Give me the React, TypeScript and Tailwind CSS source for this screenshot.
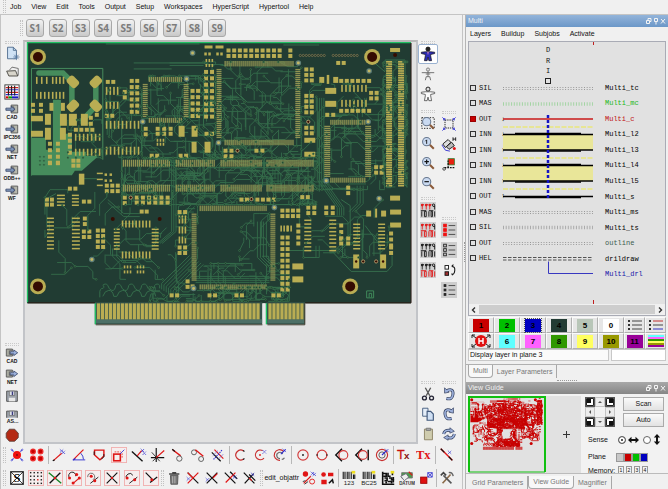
import { useState } from "react";
import type { ReactNode } from "react";
import clsx from "clsx";

/* ---------- board geometry ---------- */

type Rect = [number, number, number, number];
type Point = [number, number];

const pads: Rect[] = [];
const pins: Rect[] = [];

// cx, cy of the first pad, then columns, rows, pitch and pad size
function grid(cx: number, cy: number, cols: number, rows: number, dx = 5.5, dy = 5.5, w = 4, h = 4) {
  for (let r = 0; r < rows; r++)
    for (let c = 0; c < cols; c++) pads.push([cx + c * dx - w / 2, cy + r * dy - h / 2, w, h]);
}
function rowPins(x0: number, x1: number, y: number, h: number, step = 2, w = 1.3) {
  for (let x = x0; x <= x1; x += step) pins.push([x, y, w, h]);
}
function colPins(y0: number, y1: number, x: number, w: number, step = 2, h = 1.3) {
  for (let y = y0; y <= y1; y += step) pins.push([x, y, w, h]);
}
function legs(x0: number, n: number, step: number, y: number, h: number) {
  for (let i = 0; i < n; i++) pads.push([x0 + i * step, y, 1.6, h]);
}
function sideLegs(y0: number, n: number, step: number, x: number, w: number) {
  for (let i = 0; i < n; i++) pads.push([x, y0 + i * step, w, 1.5]);
}

// top left block
legs(36, 3, 5, 77, 7); legs(52, 4, 3.6, 77, 7);
legs(36, 4, 4, 92, 7); legs(52, 4, 3.6, 92, 7);
grid(33, 105, 2, 2, 8, 6); grid(51.5, 107, 1, 1, 5, 5, 4, 8); grid(63, 107, 1, 1, 5, 5, 4, 8);
pads.push([31, 116, 12, 5.5], [31, 131, 12, 6], [45, 114, 6, 11], [45, 128, 6, 12], [60, 114, 7, 12], [60, 128, 6, 12]);
pads.push([69, 114, 8, 12], [81, 114, 7, 12]);
grid(91, 118, 1, 2, 6, 6); grid(97, 115, 1, 1); grid(76, 130, 4, 1, 5.5);
legs(75, 7, 4, 134, 7); legs(75, 7, 4, 149, 7);
grid(70, 135, 1, 4, 5, 6); grid(50, 144, 2, 4, 8, 6.5);
grid(50, 163, 2, 1, 8); grid(73.5, 161, 2, 2, 5, 5);
// left centre
grid(108, 82, 2, 1); legs(106, 4, 3.7, 87, 8); legs(106, 4, 3.7, 102, 7); grid(107, 116, 2, 1);
grid(132, 81, 2, 6, 5.5, 6.2); grid(125, 92, 1, 2, 5, 5.5);
legs(106, 9, 4, 121, 8); legs(106, 9, 4, 147, 8);
grid(146, 129, 1, 2); grid(158, 129, 3, 2, 6.5, 5); grid(152, 156, 2, 1); grid(181, 156, 2, 1);
pads.push([179, 126, 6, 11], [192, 126, 6, 11], [192, 142, 5, 11], [205, 142, 6, 11]);
rowPins(149, 182, 77, 5); rowPins(149, 182, 118, 5); colPins(84, 117, 143, 5); colPins(84, 117, 184, 5);
legs(157, 3, 3, 139, 3); legs(157, 3, 3, 143, 3);
grid(193, 91, 2, 5, 5.5, 6.3); grid(206.5, 72, 2, 8, 6, 6.4); grid(207, 134, 2, 1);
pads.push([205, 45.5, 8, 3], [216, 45.5, 8, 3]);
grid(206, 54, 2, 1, 4, 4, 2.5, 3); grid(218, 54, 2, 1, 4, 4, 2.5, 3); legs(206, 3, 3, 59, 3); legs(206, 3, 3, 64, 3);
// main package
grid(229, 50.5, 10, 2, 5.7, 5.5); grid(291, 50.5, 1, 2);
rowPins(225, 293, 61, 5.5); rowPins(225, 293, 140, 5.5); colPins(69, 137, 217, 5); colPins(69, 137, 296, 5);
grid(226, 151, 2, 2, 6, 5.5); grid(257, 151, 2, 1, 6);
grid(307, 69.5, 2, 3); grid(307, 96, 2, 4); grid(307, 128, 2, 2);
pads.push([305, 138, 11, 5], [305, 152, 11, 5], [320, 77, 5, 6], [327.5, 75, 2.5, 9], [334, 77, 5, 6]);
pads.push([326, 88, 11, 6], [326, 101, 11, 6], [391, 48, 10, 4]);
grid(339, 63, 2, 1); grid(342, 81, 6, 1, 5.6); grid(342, 111, 6, 1, 5.6); grid(328, 115, 2, 1, 6);
legs(342, 7, 4, 85, 7); legs(342, 7, 4, 100, 7); grid(372, 93, 2, 2);
// right package and edge strips
rowPins(331, 365, 120, 5); rowPins(331, 365, 178, 5); colPins(126, 176, 325, 6); colPins(126, 176, 366, 6);
for (let y = 61; y < 187; y += 2.3) pads.push([387, y, 6, 1.7], [399, y, 6, 1.7]);
grid(377, 167.5, 2, 2); grid(349, 188, 1, 2);
pads.push([391, 196, 10, 5], [391, 210, 11, 5], [391, 223, 11, 5], [367, 211, 5, 6], [376, 209, 2, 9], [382, 211, 5, 6]);
// memory rows
const banks: Point[] = [[123, 169], [176, 215], [221, 261], [267, 313]];
banks.forEach(([a, b]) => { rowPins(a, b, 160, 7); rowPins(a, b, 185, 7); });
grid(125, 198, 1, 2); grid(137, 198, 6, 2, 6.2, 5); grid(242, 200, 2, 1); grid(258, 200, 4, 1); grid(303, 197.5, 2, 1);
grid(142, 212, 2, 1, 5);
// lower package
rowPins(200, 267, 206, 5.5); rowPins(200, 267, 285, 5); colPins(214, 281, 192, 5); colPins(214, 281, 271, 5);
grid(180, 212.5, 2, 1); legs(179, 3, 3, 216, 8); legs(179, 3, 3, 227, 7); legs(179, 3, 3, 237, 7); grid(180, 248, 2, 2);
grid(283, 211, 4, 2, 5.3, 5.5); legs(281, 3, 3, 226, 6); legs(288, 2, 3, 226, 6);
grid(283, 238, 2, 10, 5.3, 5.8); grid(299, 226, 1, 4, 5, 6);
grid(309, 208, 2, 2, 6); grid(327, 208, 2, 2, 6.5); grid(342, 226, 1, 3, 5, 6.5); grid(342, 239, 2, 2, 7, 5);
sideLegs(220, 9, 3.8, 305, 7); sideLegs(220, 9, 3.8, 330, 7); sideLegs(224, 8, 3.5, 354, 7); sideLegs(224, 8, 3.5, 379, 7);
grid(392, 234, 1, 3, 5, 6); grid(392, 248, 1, 2);
pads.push([293, 264, 11, 6], [293, 277, 11, 6], [354, 255, 6, 14], [381, 255, 6, 14]);
grid(188, 282, 1, 2); grid(193, 287, 1, 1); grid(172, 296, 2, 1); grid(210, 296, 2, 1); grid(237, 296, 2, 1); grid(274, 296, 2, 1);
// lower left
pads.push([79, 174, 5.5, 11]);
sideLegs(173, 3, 6, 97, 6); grid(107, 186, 3, 2); grid(70, 189, 2, 1);
grid(47, 200, 2, 2, 5, 5); sideLegs(195, 4, 3.3, 57, 8); sideLegs(195, 4, 3.3, 72, 7); grid(84, 202, 2, 1);
sideLegs(218, 9, 3.8, 47, 7); sideLegs(218, 9, 3.8, 72, 8);
grid(85, 219, 1, 2); grid(84, 232, 2, 2); grid(98, 231, 2, 4, 5.3);
sideLegs(229, 7, 3.3, 114, 6); sideLegs(229, 7, 3.3, 152, 7); legs(122, 9, 3.4, 221, 7); legs(122, 9, 3.4, 252, 7);
legs(124, 3, 3, 266, 3); legs(124, 3, 3, 271, 3); legs(137, 3, 3, 266, 3); legs(137, 3, 3, 271, 3);
grid(106, 175, 2, 2, 5, 6, 2.5, 2.5);

// small deterministic generator so the routing is the same on each render
function lcg(seed: number) {
  let s = seed;
  return () => (s = (s * 16807) % 2147483647) / 2147483647;
}
const rnd = lcg(4711);
const dirs: Point[] = [[1, 0], [1, 1], [0, 1], [-1, 1], [-1, 0], [-1, -1], [0, -1], [1, -1]];
const vias: Point[] = [];

function route(x0: number, y0: number, x1: number, y1: number, count: number, reach: number) {
  const clampX = (v: number) => Math.min(x1, Math.max(x0, v));
  const clampY = (v: number) => Math.min(y1, Math.max(y0, v));
  let d = "";
  for (let i = 0; i < count; i++) {
    let x = x0 + rnd() * (x1 - x0);
    let y = y0 + rnd() * (y1 - y0);
    let k = Math.floor(rnd() * 4) * 2;
    d += `M${x.toFixed(1)} ${y.toFixed(1)}`;
    const steps = 2 + Math.floor(rnd() * 3);
    for (let j = 0; j < steps; j++) {
      const len = 3 + rnd() * reach * (k % 2 ? 0.4 : 1);
      x = clampX(x + dirs[k][0] * len);
      y = clampY(y + dirs[k][1] * len);
      d += `L${x.toFixed(1)} ${y.toFixed(1)}`;
      k = (k + (rnd() > 0.5 ? 1 : 7)) % 8;
    }
    if (rnd() > 0.3) vias.push([x, y]);
  }
  return d;
}

function bus(pts: Point[], n: number, dx: number, dy: number) {
  let d = "";
  for (let i = 0; i < n; i++) d += pts.map(([x, y], j) => `${j ? "L" : "M"}${x + i * dx} ${y + i * dy}`).join("");
  return d;
}

const traces = [
  route(142, 76, 216, 158, 85, 14),
  route(106, 88, 142, 158, 30, 14),
  route(204, 62, 302, 158, 120, 15),
  route(302, 84, 386, 190, 80, 18),
  route(122, 158, 318, 205, 190, 15),
  route(384, 62, 408, 188, 100, 6),
  route(200, 264, 290, 300, 36, 16),
  route(240, 214, 270, 262, 12, 16),
  route(176, 205, 198, 300, 22, 12),
  route(300, 200, 390, 258, 26, 16),
  route(45, 190, 176, 280, 34, 14),
  route(68, 120, 102, 158, 22, 9),
  route(150, 288, 290, 302, 60, 9),
  bus([[318, 98], [318, 180], [338, 208], [338, 216]], 4, 2.2, 0),
  bus([[258, 222], [258, 258], [268, 268]], 4, 3, 0),
  bus([[162, 290], [162, 284], [190, 256]], 7, 2.3, 1.5),
  bus([[108, 200], [124, 214], [140, 214]], 2, 0, 3),
  bus([[172, 160], [172, 232], [158, 244]], 3, 2.2, 0),
  bus([[196, 277], [250, 277], [270, 277]], 4, 0, 2),
  bus([[358, 186], [358, 204], [350, 212]], 3, 3, 0),
  bus([[170, 63], [204, 63]], 2, 0, 2.5),
].join("");

const longTraces = [
  "M134 63H208M134 69H172M45 215V200L56 194M47 200V228M84 179H97M122 118V214",
  "M333 252L352 272H388L393 266V256M366 226L381 246V262M363 230V262M351 240V206L342 200",
  "M106 44H200M284 45H320M386 62V60H406V186M372 60L386 72M320 120L320 192",
  "M290 251H330M180 176L200 176L208 168H300M176 205H192",
  "M100 298V292a4 4 0 0 1 2 -3a1 1 0 0 0 1 -3a3 3 0 0 1 5 0q1 4 4 5t4 -5a3 3 0 0 1 5 0q1 4 4 5t4 -5a3 3 0 0 1 5 0q1 4 4 5t4 -5a3 3 0 0 1 5 0q1 4 4 5t4 -5a3 3 0 0 1 5 0v3",
  "M103 297q2 -6 6 -6t5 6h3q2 -6 6 -6t5 6h3q2 -6 6 -6t5 6h3q2 -6 6 -6t5 6",
].join("");

const edgePins: number[] = [];
for (let x = 97; x < 261; x += 4) edgePins.push(x);
for (let x = 269; x < 303; x += 4) edgePins.push(x);

const holes: Point[] = [[38, 57], [373, 57], [38, 287], [351, 287]];
const fiducials: Point[] = [[193, 53], [187, 79], [299, 63], [370, 71], [369, 122], [143, 122], [219, 143], [327, 181], [380, 199], [275, 208], [92, 260], [194, 289]];
const octagons: Point[] = [[73, 82], [96, 82], [73, 106], [96, 106]];

function Copper({ mono }: { mono?: boolean }) {
  const gold = mono ? "#c80000" : "#b9ad53";
  const green = mono ? "#c80000" : "#468c5c";
  const line = mono ? "#c80000" : "#356c4b";
  return (
    <g>
      <path d={traces} fill="none" stroke={line} strokeWidth={mono ? 5 : 0.9} />
      <path d={longTraces} fill="none" stroke={line} strokeWidth={mono ? 4 : 1} />
      <path
        d="M32 138H46V150H53V100H61V134H72V152H86V156H99L82 171H75L72 175.500H32Z"
        fill={green}
      />
      <path d="M39 73H63L72 82V106M96 84V106L83 120" fill="none" stroke={green} strokeWidth="5.500" strokeLinecap="round" />
      <path d="M31.500 176V68.500H103V160" fill="none" stroke={green} strokeWidth="1" />
      <g fill={mono ? gold : "#8f9252"}>
        {pins.map(([x, y, w, h], i) => <rect key={i} x={x} y={y} width={w} height={h} />)}
      </g>
      <g fill={gold}>
        {pads.map(([x, y, w, h], i) => <rect key={i} x={x} y={y} width={w} height={h} />)}
        {octagons.map(([x, y], i) => (
          <rect key={i} x={x - 6} y={y - 4.5} width="12" height="9" rx="3" transform={`rotate(${i % 3 === 0 ? 45 : -45} ${x} ${y})`} />
        ))}
        {edgePins.map((x) => <rect key={x} x={x} y="304" width="3.200" height="16" />)}
        {holes.map(([x, y], i) => <circle key={i} cx={x} cy={y} r="8" />)}
      </g>
    </g>
  );
}

function Board() {
  return (
    <svg viewBox="25 42 390 401" className="h-full w-full" preserveAspectRatio="xMinYMin meet" role="img" aria-label="Board view">
      <rect x="27" y="42" width="385" height="262" fill="#213c33" />
      <path d="M95 303H263V325H95ZM267 303H305.500V325H267Z" fill="#34524a" />
      <path d="M96 320H263V324H96ZM268 320H305V324H268Z" fill="#4c6f66" />
      <path d="M96 325.500H263M268 325.500H305.500V304" stroke="#3b3a2c" fill="none" />
      <rect x="263" y="304" width="3" height="21" fill="#e8e8e8" />
      <Copper />
      <path d="M27.500 303V42.500H412M95.500 304V325M267 304V325" fill="none" stroke="#1fc062" strokeWidth="1.300" />
      <path d="M412 43V303.500H306M28 303.500H95" fill="none" stroke="#2b1a14" strokeWidth="1" />
      <g fill="#1d3129" stroke="#3f7d50" strokeWidth="0.600">
        {vias.map(([x, y], i) => <circle key={i} cx={x} cy={y} r="0.900" />)}
        {Array.from({ length: 9 }, (_, i) => <circle key={`a${i}`} cx={301 + i * 3} cy="55.500" r="1.100" stroke="#97885a" />)}
        {Array.from({ length: 9 }, (_, i) => <circle key={`b${i}`} cx={334 + i * 3} cy="55.500" r="1.100" stroke="#97885a" />)}
        {[40, 44].map((x) => [157, 161, 165].map((y) => <circle key={`${x}-${y}`} cx={x} cy={y} r="0.800" />))}
      </g>
      {fiducials.map(([x, y], i) => (
        <g key={i}>
          <circle cx={x} cy={y} r="2.800" fill="#5f7f78" />
          <circle cx={x} cy={y} r="1.500" fill="#c3b865" />
        </g>
      ))}
      <g fill="#350c02">
        {holes.map(([x, y], i) => <circle key={i} cx={x} cy={y} r="5" />)}
        <circle cx="113" cy="219.500" r="2" />
        <circle cx="160" cy="219.500" r="2" />
        <circle cx="396" cy="55" r="2" />
        <circle cx="357" cy="262" r="1.200" />
        <circle cx="384" cy="262" r="1.200" />
        <g stroke="#b9a070" strokeWidth="0.900">
          <circle cx="131" cy="198" r="1.600" />
          <circle cx="252" cy="199.500" r="1.600" />
          <circle cx="309" cy="122" r="1.600" />
          <circle cx="238" cy="151" r="1.600" />
          <circle cx="364" cy="262" r="1.600" />
          <circle cx="377" cy="262" r="1.600" />
        </g>
      </g>
      <path d="M367.500 291.500h7v7h-7zM370 298v-4h2.500v4" fill="none" stroke="#3f8a5a" />
    </svg>
  );
}

/* ---------- icons ---------- */

function Ico({ children }: { children: ReactNode }) {
  return (
    <svg width="16" height="16" viewBox="0 0 18 18" fill="none" stroke="#111" strokeWidth="1.300" className="m-px shrink-0">
      {children}
    </svg>
  );
}

const RED = "#e01515";
const BLUE = "#2a2ad0";
const tick = (x: number, y: number) => (
  <path d={`M${x - 2} ${y + 2}l4-4M${x - 2} ${y - 2}l4 4`} stroke={BLUE} strokeWidth="1" strokeDasharray="1.200 .8" />
);
const pinkFrame = <rect x=".5" y=".5" width="17" height="17" fill="#f6eeee" stroke="#f0b0b0" strokeWidth="1.100" />;
const dot = (x: number, y: number, r = 1.7) => <circle cx={x} cy={y} r={r} fill={RED} stroke="none" />;

const drawTools: (null | [string, ReactNode])[] = [
  ["Add pad", <><circle cx="9" cy="9" r="4.500" fill="#f01010" stroke="none" /><path d="M2 3l3 2M3 2l2 3M16 3l-3 2M15 2l-2 3M2 15l3-2M3 16l2-3M16 15l-3-2M15 16l-2-3" stroke={BLUE} strokeWidth=".9" /><circle cx="9" cy="9" r="1" fill="#701010" stroke="none" /></>],
  ["Add pad array", <>{[4.5, 13].map((x) => [5, 13].map((y) => <circle key={`${x}${y}`} cx={x} cy={y} r="2.700" fill="#c80000" stroke="#f03030" />))}</>],
  null,
  ["Add line", <><path d="M3 15L12 7" stroke={RED} /><path d="M2 15.500l2-1" />{tick(12, 4.5)}{tick(14, 6)}</>],
  ["Add angled line", <><path d="M3 14L14 3" stroke={RED} /><path d="M3 14.500H16M11 7q3 3 3 7" stroke={BLUE} strokeWidth="1" /><path d="M2 15l3-2" stroke={BLUE} /></>],
  ["Add polygon", <><path d="M4 3.500H14.500V10L10 14.500L4 9Z" stroke={RED} strokeWidth="1.600" /><path d="M3.500 9V5M14.500 8v3l-3 3" strokeWidth="1" /></>],
  ["Add rectangle", <>{pinkFrame}<rect x="3" y="8" width="7.500" height="7.500" stroke={RED} strokeWidth="1.800" /><path d="M4 5.500h7M12.500 7v6" stroke={RED} strokeDasharray="2 1" strokeWidth=".8" /><path d="M10 8l5-5" stroke={BLUE} strokeWidth=".9" /></>],
  ["Perpendicular", <><path d="M1 5L13 16" strokeWidth="1.500" /><path d="M7 10L12 4" stroke={RED} />{tick(13, 4)}{tick(15, 7)}</>],
  ["Through point", <><path d="M7 1V17M1 12H16" /><path d="M2 6l9 10M3 16l4-4" strokeWidth=".9" /><path d="M7 12L16 4" stroke={RED} /></>],
  ["Tangent", <><path d="M3 3L12 10" stroke={RED} strokeWidth="1.500" /><path d="M2.500 2.500l3 2.500" /><circle cx="10.500" cy="13" r="3" stroke="#555" strokeWidth="1" /></>],
  ["Two tangents", <><circle cx="4.500" cy="6" r="2.800" stroke="#555" strokeWidth="1" /><circle cx="12.500" cy="13.500" r="2.800" stroke="#555" strokeWidth="1" /><path d="M6 3L15 10.500" stroke={RED} strokeWidth="1.500" /></>],
  ["Parallel", <><path d="M2 6L12 16" /><path d="M5 3L15 13" stroke={RED} /><path d="M4 14L14 3" stroke={BLUE} strokeDasharray="1.500 1" /><path d="M3 10l6-6M9 14l6-6" stroke="#7070d8" strokeWidth=".8" /></>],
  null,
  ["Arc", <><path d="M13 4.500A5.500 5.500 0 1 0 13 13.500" stroke="#c83030" /><path d="M12.500 4l1.500 1M12.500 14l1.500-1" /></>],
  ["Centre arc", <><path d="M12 4A5.500 5.500 0 1 0 13.500 12.500" stroke="#c83030" />{dot(9, 9, 1)}{tick(14, 5.500)}</>],
  ["Offset arc", <><path d="M13 5A6 6 0 1 0 9 15" stroke="#c83030" /><path d="M12 8A3.500 3.500 0 1 0 9 13M14 12q-1 2-3 2" stroke="#666" /><path d="M10 8l5-5" stroke={BLUE} />{tick(14, 4)}</>],
  null,
  ["Circle", <><circle cx="9" cy="9" r="5.800" stroke="#d23a3a" /><circle cx="9" cy="9" r="1" fill="#111" stroke="none" /></>],
  ["Two point circle", <><circle cx="9" cy="9" r="5.500" stroke="#d23a3a" /><path d="M2.500 9h2M13.500 9h2" /></>],
  ["Circle in angle", <><path d="M9 2L2 9L9 16" strokeWidth="1.600" /><circle cx="10.500" cy="9" r="5" stroke="#d23a3a" /></>],
  ["Circle in wedge", <><path d="M9 2L2 9L9 16M16 3V15" strokeWidth="1.600" /><circle cx="10" cy="9" r="5" stroke="#d23a3a" /></>],
  ["Concentric", <><circle cx="9" cy="9" r="6.300" stroke="#c83030" /><circle cx="9" cy="9" r="3.500" stroke="#555" strokeWidth="1" /><path d="M9 9l5-5" stroke={BLUE} />{tick(14.5, 4)}</>],
  null,
  ["Text", <><text x="1" y="14" fontSize="14" fontFamily="Liberation Sans" fill="#c81010" stroke="#c81010" strokeWidth=".4">T</text><text x="9" y="14" fontSize="11" fontFamily="Liberation Sans" fontWeight="700" fill="#8a1010" stroke="none">x</text></>],
  ["Serif text", <text x="0" y="14" fontSize="14" fontFamily="Liberation Serif" fontWeight="700" fill={RED} stroke="none">Tx</text>],
  null,
  ["Cut line", <><path d="M2 2L15 15" stroke={RED} strokeWidth="1.600" /><path d="M2 2l4 4M11 11l4 4" />{tick(12, 6)}</>],
];

const barcode = (label: string) => (
  <>
    <path d="M2.500 2V10M4.500 2V10M7 2V10M9 2V10M11.500 2V10M14 5V10M15.500 5V10" strokeWidth="1.200" />
    <path d="M12 1h4v3h-4z" fill="#f0e020" stroke="none" />
    <text x="9" y="17" fontSize="7" textAnchor="middle" fontFamily="Liberation Sans" fill="#222" stroke="none">{label}</text>
  </>
);

const editTools: (null | "grip" | "field" | [string, ReactNode])[] = [
  ["Selection", <><rect x="2" y="2" width="14" height="14" fill="#fff" strokeWidth="1.300" /><path d="M2 2L16 16M16 2L2 16" strokeWidth=".9" /><text x="9" y="14" fontSize="14" textAnchor="middle" fontFamily="Liberation Serif" fontWeight="700" fill="#111" stroke="none">S</text></>],
  ["Snap to grid", <>{pinkFrame}{[3, 7, 11, 15].map((x) => [3, 7, 11, 15].map((y) => <rect key={`${x}-${y}`} x={x - 0.8} y={y - 0.8} width="1.600" height="1.600" fill={x === 11 && y === 11 ? RED : "#222"} stroke="none" />))}</>],
  ["Snap to crossing", <>{pinkFrame}<path d="M2 3L16 15" stroke="#108020" strokeWidth="1.500" /><path d="M15 3L3 15" strokeWidth="1.500" />{dot(9, 9, 1.4)}</>],
  ["Snap to arc ends", <>{pinkFrame}<path d="M4 9A4 4 0 1 1 11 7" strokeWidth="1" /><path d="M8 15l7-6" stroke={RED} strokeWidth="1.200" />{dot(4, 9)}{dot(12, 5)}{dot(8, 14.500)}{dot(15, 9)}</>],
  ["Snap to centre", <>{pinkFrame}<path d="M3 8A4 4 0 1 1 9 11" stroke="#666" strokeWidth="1" /><path d="M6 15l9-7" strokeWidth="1" />{dot(7, 7)}{dot(11, 12)}</>],
  ["Snap to intersect", <>{pinkFrame}<path d="M3 3L15 15M15 3L3 15" strokeWidth="1.300" />{dot(9, 9, 1.3)}</>],
  ["Snap to contour", <>{pinkFrame}<path d="M3 10A4 4 0 1 1 10 6M6 15l9-7" strokeWidth="1" />{dot(3.500, 9)}{dot(12, 11)}</>],
  ["Snap to end", <>{pinkFrame}<path d="M3 3l7 7M8 14l8-6" strokeWidth="1.400" />{dot(10, 11)}</>],
  "grip",
  ["Delete", <><path d="M5 6H13.500L13 16H5.500Z" fill="#777" stroke="#555" strokeWidth="1" /><path d="M3.500 4.500h11.500M7 3h4.500" stroke="#444" strokeWidth="1.600" /><path d="M7.500 7v8M10 7v8" stroke="#bbb" strokeWidth="1" /></>],
  ["Trim", <><path d="M3 3L15 15" /><path d="M15 3L3 15M3 3l6 6" stroke={RED} strokeWidth="1.400" />{tick(4, 10)}</>],
  ["Extend", <><path d="M3 3L15 15M15 3L3 15" strokeWidth="1.400" /><path d="M10 9l5-5" stroke={RED} />{tick(4, 11)}</>],
  ["Break", <><path d="M2 3L14 15M8 2l8 8" strokeWidth="1.400" /><path d="M14 3L3 14" stroke={RED} strokeWidth="1.400" />{tick(13, 8)}</>],
  ["Join", <><path d="M2 3L14 15M13 4L3 15M8 5l7 7" strokeWidth="1.400" />{tick(12, 5)}<path d="M8 9l3 3" stroke={RED} /></>],
  "grip",
  "field",
  ["Change symbol", <>{dot(5, 4.5, 3)}<path d="M3 15L11 7" stroke={RED} />{tick(13, 4)}{tick(15, 5)}<circle cx="12.500" cy="13" r="2.800" stroke={RED} strokeWidth="1" /><path d="M2 13l3-1M4 16l4-3" strokeWidth=".9" /></>],
  ["Change shape", <>{dot(4, 5, 2.6)}<path d="M9 3h6v4h-6zM1.500 11h6v5h-6z" fill={RED} stroke="none" /><path d="M10 15l4-4l1 4" strokeWidth="1.700" /></>],
  null,
  ["Barcode 39", barcode("123")],
  ["Barcode 25", barcode("BC25")],
  ["Data matrix", <><path d="M3 2V16H16M3 4h4v3H4M9 3v4h3M5 9h3v3H5M10 9h3v2h3M9 13h4v2M14 3v3M6 14h2M15 8v6" strokeWidth="1.800" /><path d="M12 1h4v3h-4z" fill="#f0e020" stroke="none" /></>],
  ["Datum", <><path d="M3 3h12v6H3z" fill="#4c9c4c" stroke="#777" strokeWidth="1" /><path d="M2 7l6-3 3 4-5 4z" fill="#eee" stroke="#667" strokeWidth="1" /><path d="M11 2l4 4" stroke={RED} /><text x="9" y="17" fontSize="5" textAnchor="middle" fontFamily="Liberation Sans" fontWeight="700" fill="#333" stroke="none">DATUM</text></>],
  ["Reference", <><rect x="3" y="8" width="7" height="7" fill="#e01010" stroke="#a00000" strokeWidth="1" /><path d="M11 3h5v5h-5zM11 3l5 5M16 3l-5 5" stroke={BLUE} strokeWidth=".9" /></>],
  null,
  ["Tools", <><path d="M4 15L13 5" stroke="#8a6a48" strokeWidth="1.800" /><path d="M5 6L14 15" stroke="#555" strokeWidth="1.800" /><path d="M2 6l3-3 3 3" stroke="#444" strokeWidth="1.800" /><path d="M11 3q4-1 5 4" stroke="#666" strokeWidth="1.600" /></>],
];

function PlugIcon({ out }: { out?: boolean }) {
  return (
    <svg width="14" height="12" viewBox="0 0 16 12" fill="none">
      {out
        ? <path d="M1.500 1.500h7v2H5v4h3.500v2h-7z" fill="#a8aaa0" stroke="#555" />
        : <path d="M7 1.500h7.500v9H7v-2h3v-5H7z" fill="#b5b7ad" stroke="#555" />}
      {out
        ? <path d="M6 4.500h4v-2l4.500 3.200L10 9V7H6z" fill="#9db2dd" stroke="#354466" strokeWidth=".9" />
        : <path d="M1 5h6V3l4.500 3.200L7 9.500V7.500H1z" fill="#7f96b8" stroke="#354466" strokeWidth=".9" />}
    </svg>
  );
}

const newIcon = <><path d="M4 2.500H10.500L14 6V15.500H4Z" fill="#cfe2f5" stroke="#4d6a8c" strokeWidth="1" /><path d="M10.500 2.500V6H14" stroke="#4d6a8c" strokeWidth="1" /><path d="M14 10v7M10.500 13.500h7M11.500 11l5 5M16.500 11l-5 5" stroke="#5577a0" strokeWidth=".9" /></>;
const openIcon = <><path d="M6 7L9 3.500L16 5V13" fill="#eee" stroke="#666" strokeWidth="1" /><path d="M3 8L13 7.500L15.500 13.500H5.500Z" fill="#d8d5cb" stroke="#44423c" strokeWidth="1" /></>;
const matrixIcon = <><rect x="1" y="1" width="16" height="16" fill="#fff" stroke="#333" strokeWidth="1" /><path d="M2 4h14M2 9.500h14" stroke="#d02020" /><path d="M2 6.500h14M2 12h14" stroke="#3030d0" /><path d="M5 2v11M8.500 2v11M12 2v11" stroke="#222" /><path d="M2 15h3" stroke="#d00" strokeWidth="2.200" /><path d="M5 15h4" stroke="#00a000" strokeWidth="2.200" /><path d="M9 15h7" stroke="#1a1ac0" strokeWidth="2.200" /></>;
const floppy = <><path d="M3 3.500H15V15H3Z" fill="#9fa5ad" stroke="#4a4a4a" strokeWidth="1" /><path d="M6 3.500h6v5H6z" fill="#dfe3ea" stroke="#666" strokeWidth=".8" /><path d="M9.500 4v4" stroke="#3a3a80" strokeWidth="1.600" /><path d="M5.500 11h7v4h-7z" fill="#e8e8e8" stroke="none" /></>;

function Person({ fill, body }: { fill: string; body: string }) {
  return (
    <Ico>
      <circle cx="9" cy="3.500" r="2.300" fill={fill} strokeWidth="1" />
      <path d="M1.500 8.500V7L6 6.500H12L16.500 7V8.500L12 9.500V11L13 16.500H10L9 12.500L8 16.500H5L6 11V9.500Z" fill={body} stroke={fill === "#ddd" ? "#333" : "#111"} strokeWidth=".8" />
      {fill === "#222" && <path d="M8 6.500l1 4 1-4" fill="#d080c0" stroke="none" />}
    </Ico>
  );
}

const lens = (mark: ReactNode) => (
  <>
    <path d="M11 11L15.500 15.500" stroke="#8a5a3a" strokeWidth="2.300" />
    <circle cx="7.500" cy="7.500" r="4.600" fill="#c9d9f0" stroke="#68788f" strokeWidth="1.200" />
    {mark}
  </>
);

// two rows of test probes over binary digits
function Digits({ top, bottom }: { top: string; bottom: string }) {
  return (
    <>
      <rect x="0" y="0" width="18" height="18" fill="#cfcfcf" stroke="none" />
      {[2.5, 7, 11].map((x) => (
        <g key={x}>
          <circle cx={x} cy="3.500" r="1.500" fill={top} stroke="none" />
          <path d={`M${x} 3v5.500M${x - 1} 3h3`} stroke={top} strokeWidth="1" />
        </g>
      ))}
      <path d="M16.500 8.500V3.500a1.300 1.300 0 1 0 -2.600 0q0 2 2.600 1.500" strokeWidth="1" />
      <path d="M2 10.500v6M5 10.500h2v6h-2zM10 10.500v6M12.500 10.500h1.500v6h-1.500zM16.500 10.500v6M1 9.800h6M10 9.800h5" stroke={bottom} strokeWidth="1.100" />
    </>
  );
}

function ListIcon({ color, box }: { color: string; box?: boolean }) {
  return (
    <>
      <rect x="0" y="0" width="18" height="18" fill="#cdcdcd" stroke="none" />
      {[4, 9, 14].map((y) => (
        <g key={y}>
          <rect x={box ? 3 : 3.500} y={y - (box ? 1.5 : 1)} width={box ? 3 : 2} height={box ? 3 : 2} fill={color} stroke={color === "none" ? "#222" : color} strokeWidth="1" />
          <path d={`M8.500 ${y}h7.500`} stroke="#444" strokeWidth="1" />
        </g>
      ))}
    </>
  );
}

const zoomTools: [string, ReactNode][] = [
  ["Zoom area", <><rect x="2" y="3" width="14" height="12" strokeDasharray="1.500 1.500" strokeWidth="1" />{lens(null)}</>],
  ["Zoom 1:1", lens(<path d="M6 7l1.500-1.500V10" strokeWidth="1" />)],
  ["Zoom in", lens(<path d="M5 7.500h5M7.500 5v5" />)],
  ["Zoom out", lens(<path d="M5 7.500h5" />)],
];
const frameTools: [string, ReactNode][] = [
  ["Fit to window", <><rect x="4.500" y="4.500" width="9" height="9" strokeDasharray="1.500 1" strokeWidth="1" /><path d="M3 5V3H5M13 3h2v2M3 13v2h2M15 13v2h-2M1.500 1.500l3.500 3.500M16.500 1.500L13 5M1.500 16.500L5 13M16.500 16.500L13 13" stroke={BLUE} strokeWidth=".9" /></>],
  ["Highlight chain", <><path d="M2 9l6-5 3 3-6 6z" fill="#ddd" strokeWidth="1" /><path d="M6 12l6-5 3 4-6 4z" fill="#bbb" strokeWidth="1" /><path d="M13.500 1.500v4M16.500 1.500v4M13.500 3.500h3" strokeWidth="1" /><path d="M1 10l4 6 5 1" stroke={BLUE} strokeWidth="1" />{dot(15, 14)}</>],
  ["Origin", <><rect x="8" y="3" width="7" height="7" fill="#e82010" stroke="#308030" strokeWidth=".9" /><path d="M8 5v9M4 13h12" strokeDasharray="2 1" /><circle cx="3.500" cy="14.500" r="1.500" strokeWidth=".8" /></>],
];
const digitTools: [string, ReactNode][] = [
  ["Show top", <Digits top="#e02020" bottom="#222" />],
  ["Show all", <Digits top="#e02020" bottom="#e02020" />],
  ["Show none", <Digits top="#222" bottom="#222" />],
  ["Show bottom", <Digits top="#222" bottom="#e02020" />],
];
const listTools: [string, ReactNode][] = [
  ["Select all", <ListIcon color="#f01010" box />],
  ["Select none", <ListIcon color="none" box />],
  ["Invert", <><rect x="4.500" y="4" width="4" height="4" fill="#fff" strokeWidth="1" /><rect x="4.500" y="11" width="4" height="4" fill="#a03030" strokeWidth="1" /><path d="M12 5q4 0 3.500 4.500t-3 4.500M12 5l2-2M12 13l1 2" strokeWidth="1.200" /></>],
  ["List", <ListIcon color="#222" />],
];
const clipTools: [string, ReactNode][] = [
  ["Cut", <><path d="M6 2L11 11M12 2L7 11" stroke="#555" strokeWidth="1.500" /><circle cx="5" cy="13.500" r="2.200" stroke="#223" strokeWidth="1.500" /><circle cx="13" cy="13.500" r="2.200" stroke="#223" strokeWidth="1.500" /></>],
  ["Copy", <><path d="M3 2.500h6v9H3z" fill="#e4edf8" stroke="#42597c" strokeWidth="1" /><path d="M8 6h4l3 3v7H8z" fill="#d0e0f4" stroke="#42597c" /></>],
  ["Paste", <><path d="M5 3.500h9V15.500H5z" fill="#cfccae" stroke="#8a8060" strokeWidth="1" /><path d="M7 2.500h5v2.500H7z" fill="#aaa" stroke="#777" strokeWidth="1" /></>],
];
const undoArc = <><path d="M6 5.500Q14 2 13.500 9T6 14" stroke="#34405e" strokeWidth="3.400" /><path d="M4 2v6l5-1z" fill="#9db1dc" stroke="#34405e" strokeWidth=".8" /><path d="M6 5.500Q14 2 13.500 9T6 14" stroke="#9db1dc" strokeWidth="1.800" /></>;
const historyTools: [string, ReactNode][] = [
  ["Undo", undoArc],
  ["Redo", <g transform="translate(18 0) scale(-1 1)">{undoArc}</g>],
  ["Refresh", <><path d="M3 9Q4 4 11 5M15 9Q14 15 7 13" stroke="#34405e" strokeWidth="3.400" /><path d="M10 2l5 4-5 2zM8 10l-5 3 5 3z" fill="#9db1dc" stroke="#34405e" strokeWidth=".8" /><path d="M3 9Q4 4 11 5M15 9Q14 15 7 13" stroke="#9db1dc" strokeWidth="1.800" /></>],
];

/* ---------- shared pieces ---------- */

function Grip({ vertical }: { vertical?: boolean }) {
  return vertical
    ? <span className="h-[16px] w-[3px] shrink-0 border-x border-dotted border-[#c2c2c2]" />
    : <span className="h-[3px] w-[14px] shrink-0 border-y border-dotted border-[#cacaca]" />;
}

function ToolColumn({ tools }: { tools: [string, ReactNode][] }) {
  return (
    <>
      {tools.map(([name, art]) => (
        <button key={name} type="button" aria-label={name} className="flex h-[20px] w-[20px] items-center justify-center">
          <Ico>{art}</Ico>
        </button>
      ))}
    </>
  );
}

function LabelledTool({ label, children }: { label: string; children: ReactNode }) {
  return (
    <button type="button" className="flex h-[19px] w-[22px] flex-col items-center justify-center">
      {children}
      <span className="text-[5px] leading-[5px] font-bold">{label}</span>
    </button>
  );
}

function TitleBar({ title, active }: { title: string; active?: boolean }) {
  return (
    <div
      className={clsx(
        "flex h-[12px] shrink-0 items-center justify-between px-[2px] text-[7px] text-[#f2f2f2]",
        active ? "bg-linear-to-b from-[#93b4da] to-[#6b97c8]" : "bg-linear-to-b from-[#a8a8a8] to-[#868686]",
      )}
    >
      <span>{title}</span>
      <svg width="20" height="7" viewBox="0 0 20 7" fill="none" stroke="#f4f4f4" strokeWidth="1">
        <path d="M.5 2.500h3v3h-3zM2 2.500v-2h3v3H3.500M8.500 .5h3v3h-3zM10 3.500v3M15 1l4 4.500M19 1l-4 4.500" />
      </svg>
    </div>
  );
}

const menuItems = ["Job", "View", "Edit", "Tools", "Output", "Setup", "Workspaces", "HyperScript", "Hypertool", "Help"];
const steps = ["S1", "S2", "S3", "S4", "S5", "S6", "S7", "S8", "S9"];

const layers = [
  { kind: "SIL", arrow: "", name: "Multi_tc", tone: "text-black" },
  { kind: "MAS", arrow: "", name: "Multi_mc", tone: "text-[#18b818]" },
  { kind: "OUT", arrow: "↓", name: "Multi_c", tone: "text-[#c01010]" },
  { kind: "INN", arrow: "↓", name: "Multi_l2", tone: "text-black" },
  { kind: "INN", arrow: "↑", name: "Multi_l3", tone: "text-black" },
  { kind: "INN", arrow: "↓", name: "Multi_l4", tone: "text-black" },
  { kind: "INN", arrow: "↑", name: "Multi_l5", tone: "text-black" },
  { kind: "OUT", arrow: "↑", name: "Multi_s", tone: "text-black" },
  { kind: "MAS", arrow: "", name: "Multi_ms", tone: "text-black" },
  { kind: "SIL", arrow: "", name: "Multi_ts", tone: "text-black" },
  { kind: "OUT", arrow: "", name: "outline", tone: "text-[#3c5c50]" },
  { kind: "HEL", arrow: "", name: "drildraw", tone: "text-black" },
];

const planes = [
  ["1", "bg-[#c80000]"], ["2", "bg-[#00c000]"], ["3", "bg-[#0000c0]"], ["4", "bg-[#223c34]"], ["5", "bg-[#b8c6b8]"], ["0", "bg-white"],
  ["H", ""], ["6", "bg-[#60ffff]"], ["7", "bg-[#ff60ff]"], ["8", "bg-[#309800]"], ["9", "bg-[#ffff60]"], ["10", "bg-[#989800]"], ["11", "bg-[#980098]"],
];

/* ---------- layer stack ---------- */

function StackDrawing() {
  // rows are 15.5 apart, first one centred at 46
  const row = (i: number) => 46 + i * 15.5;
  const core = (y: number, below: boolean) => (
    <g key={y}>
      <path d={`M0 ${y}H90`} stroke="#000" strokeWidth="1.300" />
      <path d={`M12 ${y + (below ? 1 : -1)}H78`} stroke="#000" strokeWidth="1.500" />
    </g>
  );
  return (
    <svg width="92" height="262" viewBox="0 0 92 262" fill="none" className="shrink-0">
      {["D", "R", "I"].map((c, i) => (
        <text key={c} x="45" y={10 + i * 10.5} fontSize="7" textAnchor="middle" fontFamily="Liberation Mono" fill="#111">{c}</text>
      ))}
      <rect x="42.500" y="36.500" width="5" height="5" stroke="#222" />
      <path d="M90.500 0v3M90.500 258v4" stroke="#c02020" />
      <path d={`M0 ${row(0) - 0.5}H90M0 ${row(0) + 1.5}H90`} stroke="#999" strokeWidth="1" strokeDasharray="1 1.700" />
      <path d={`M0 ${row(1) + 0.5}H90`} stroke="#a4d4a4" strokeWidth="3.500" strokeDasharray="1 1.700" />
      <path d={`M0 ${row(2)}H90`} stroke="#c81818" strokeWidth="1.500" />
      <path d={`M0 ${row(2) + 8}H90M0 ${row(4) + 8}H90M0 ${row(6) + 8}H90`} stroke="#e9e67c" strokeWidth="1.500" strokeDasharray="5 1.500" />
      <path d={`M0 ${row(3)}h90v15.500h-90zM0 ${row(5)}h90v15.500h-90z`} fill="#e9e699" />
      {core(row(3), false)}{core(row(4), true)}{core(row(5), false)}{core(row(6), true)}{core(row(7), true)}
      <path d={`M45 ${row(2) - 4}V${row(7) + 3}`} stroke="#1414c4" strokeWidth="2.500" strokeDasharray="3 2" />
      {[8, 10].map((i) => <path key={i} d={`M0 ${row(i) - 0.5}H90M0 ${row(i) + 1.5}H90`} stroke="#999" strokeWidth="1" strokeDasharray="1 1.700" />)}
      <path d={`M0 ${row(9)}H90`} stroke="#aaa" strokeWidth="3.500" strokeDasharray="1 1.700" />
      <path d={`M0 ${row(11) - 1}H90M0 ${row(11) + 1.5}H90`} stroke="#555" strokeWidth="1.200" strokeDasharray="3.500 1.500" />
      <path d={`M45.500 ${row(11) + 3}V${row(12) - 0.5}H90`} stroke="#3838c0" />
    </svg>
  );
}

function LayerStack() {
  const [shown, setShown] = useState<string[]>(["Multi_c"]);
  const toggle = (name: string) =>
    setShown((s) => (s.includes(name) ? s.filter((n) => n !== name) : [...s, name]));

  return (
    <div className="flex min-h-0 flex-1 items-start overflow-hidden bg-[#e1e1e1] pl-px font-['Liberation_Mono',monospace] text-[7px] leading-[8px]">
      <div className="mt-[38px] grid h-[186px] w-[33px] auto-rows-fr">
        {layers.map((l) => (
          <div key={l.name} className="flex items-center gap-[3px]">
            <input
              id={l.name}
              type="checkbox"
              checked={shown.includes(l.name)}
              onChange={() => toggle(l.name)}
              className="h-[6px] w-[6px] shrink-0 appearance-none border border-[#333] checked:border-[#900] checked:bg-[#c80000]"
            />
            <span className="w-[19px]">{l.kind}</span>
            <span className="w-[4px] shrink-0 font-bold">{l.arrow}</span>
          </div>
        ))}
      </div>
      <StackDrawing />
      <div className="mt-[38px] ml-[10px] grid h-[202px] auto-rows-fr">
        {layers.map((l) => (
          <label key={l.name} htmlFor={l.name} className={clsx("flex items-center", l.tone)}>{l.name}</label>
        ))}
        <span className="flex items-center text-[#1414a8]">Multi_drl</span>
      </div>
    </div>
  );
}

/* ---------- right dock ---------- */

function PlaneButtons() {
  const [plane, setPlane] = useState("3");
  const cell = "flex h-[16px] items-center justify-center border border-[#fafafa] border-r-[#b0b0b0] border-b-[#b0b0b0] bg-[#e6e6e6]";
  const button = ([id, tone]: string[]) => (
    <button key={id} type="button" onClick={() => setPlane(id)} aria-pressed={plane === id} className={cell}>
      {id === "H" ? (
        <svg width="20" height="14" viewBox="0 0 20 14" fill="none">
          <path d="M1 1l4 3M19 1l-4 3M1 13l4-3M19 13l-4-3M1 4V1h3M16 1h3v3M1 10v3h3M16 13h3v-3" stroke="#222" />
          <circle cx="10" cy="7" r="6" fill="#e01010" />
          <path d="M8 4v6M12 4v6M8 7h4" stroke="#fff" strokeWidth="1.400" />
        </svg>
      ) : (
        <span className={clsx("flex h-[13px] w-[16px] items-center justify-center text-[8px] leading-[13px] font-bold text-black", tone, plane === id && "outline outline-dotted outline-[#555]")}>{id}</span>
      )}
    </button>
  );
  const bars = (colors: string[]) => (
    <svg width="16" height="12" viewBox="0 0 16 12">
      {colors.map((c, i) => (
        <g key={i}><rect x="1" y={1 + i * 4} width="2" height="2" fill="#333" /><rect x="5" y={1.5 + i * 4} width="10" height="1" fill={c} /></g>
      ))}
    </svg>
  );
  return (
    <div className="grid shrink-0 grid-cols-[26fr_26fr_26fr_26fr_26fr_26fr_21fr_21fr]">
      {planes.slice(0, 6).map(button)}
      <button type="button" aria-label="Plane list" className={cell}>{bars(["#444", "#444", "#444"])}</button>
      <button type="button" aria-label="Plane colours" className={cell}>{bars(["#c03030", "#444", "#3030c0"])}</button>
      {planes.slice(6).map(button)}
      <button type="button" aria-label="All planes" className={cell}>
        <svg width="16" height="12" viewBox="0 0 16 12">
          {["#60ffff", "#ff60ff", "#309800", "#ffff60", "#989800", "#980098"].map((c, i) => <rect key={c} y={i * 2} width="16" height="2" fill={c} />)}
        </svg>
      </button>
    </div>
  );
}

function Tabs({ items, active }: { items: string[]; active: string }) {
  return (
    <div className="flex h-[13px] shrink-0 items-stretch pl-[2px] text-[7px] text-[#777]">
      {items.map((t) => (
        <button
          key={t}
          type="button"
          className={clsx("border-r border-[#a8a8a8] px-[4px]", t === active && "rounded-b-sm border-b border-l bg-[#f8f8f8]")}
        >
          {t}
        </button>
      ))}
    </div>
  );
}

function ViewGuide() {
  const pad = "flex items-center justify-center border border-[#c4c4c4] bg-[#ececec]";
  const corner = (x: number, y: number, name: string) => (
    <button type="button" aria-label={name} className="flex items-center justify-center border border-[#555] bg-[#ddd]">
      <svg width="8" height="8" viewBox="0 0 8 8"><path d="M.5 .5h7v7h-7z" fill="#fff" stroke="#222" /><rect x={x} y={y} width="4" height="4" fill="#111" /></svg>
    </button>
  );
  const arrow = (d: string, name: string) => (
    <button type="button" aria-label={name} className={pad}>
      <svg width="4" height="4" viewBox="0 0 4 4"><path d={d} fill="#555" /></svg>
    </button>
  );
  return (
    <div className="flex h-[80px] shrink-0 gap-[4px] overflow-hidden border-b border-[#bbb] bg-[#f2f2f2] pt-[2px] pl-[2px]">
      <svg width="113" height="77" viewBox="0 0 113 77" className="shrink-0">
        <rect width="113" height="77" fill="#e1e1e1" />
        <g transform="translate(-3.500 -7) scale(.19)"><Copper mono /></g>
        <path d="M1 76V1H77V76" fill="none" stroke="#10c010" strokeWidth="2" />
        <path d="M1 76H77" stroke="#10c010" />
        <path d="M98.500 35v7M95 38.500h7" stroke="#333" />
      </svg>
      <div className="flex-1 pt-px pr-[4px] text-[7px] leading-[10px]">
        <div className="flex justify-between">
          <div className="grid h-[30px] w-[30px] grid-cols-3 grid-rows-3">
            {corner(1, 1, "Top left")}{arrow("M0 3L2 1L4 3z", "Up")}{corner(3, 1, "Top right")}
            {arrow("M3 0L1 2L3 4z", "Left")}<span />{arrow("M1 0L3 2L1 4z", "Right")}
            {corner(1, 3, "Bottom left")}{arrow("M0 1L2 3L4 1z", "Down")}{corner(3, 3, "Bottom right")}
          </div>
          <div className="flex w-[41px] flex-col gap-[2px]">
            <button type="button" className="h-[14px] border border-[#aaa] bg-linear-to-b from-[#fafafa] to-[#e2e2e2]">Scan</button>
            <button type="button" className="h-[14px] border border-[#aaa] bg-linear-to-b from-[#fafafa] to-[#e2e2e2]">Auto</button>
          </div>
        </div>
        <fieldset className="mt-[7px] flex items-center pl-[3px]">
          <span className="w-[30px]">Sense</span>
          <input id="sense-h" name="sense" type="radio" defaultChecked className="h-[8px] w-[8px] appearance-none rounded-full border border-[#666] bg-white checked:bg-[#222] checked:ring-2 checked:ring-white checked:ring-inset" />
          <label htmlFor="sense-h" aria-label="Horizontal" className="ml-[2px]">
            <svg width="11" height="8" viewBox="0 0 11 8"><path d="M0 4L3.500 .8V3H7.500V.8L11 4L7.500 7.200V5H3.500V7.200Z" fill="#111" /></svg>
          </label>
          <input id="sense-v" name="sense" type="radio" className="ml-[4px] h-[8px] w-[8px] appearance-none rounded-full border border-[#666] bg-white checked:bg-[#222] checked:ring-2 checked:ring-white checked:ring-inset" />
          <label htmlFor="sense-v" aria-label="Vertical" className="ml-[2px]">
            <svg width="8" height="11" viewBox="0 0 8 11"><path d="M4 0L.8 3.500H3V7.500H.8L4 11L7.200 7.500H5V3.500H7.200Z" fill="#111" /></svg>
          </label>
        </fieldset>
        <div className="mt-[7px] flex items-center pl-[3px]">
          <span className="w-[28px]">Plane</span>
          <button type="button" aria-label="No plane" className="h-[9px] w-[8px] border border-[#999] bg-[#c8c8c8]" />
          <button type="button" aria-label="Red plane" className="h-[9px] w-[8px] border border-[#999] bg-[#c80000]" />
          <button type="button" aria-label="Green plane" className="h-[9px] w-[8px] border border-[#999] bg-[#00c000]" />
          <button type="button" aria-label="Blue plane" className="h-[9px] w-[8px] border border-[#999] bg-[#0000c0]" />
        </div>
        <div className="mt-[4px] flex items-start pl-[3px]">
          <span className="w-[30px]">Memory:</span>
          {["1", "2", "3", "4"].map((m) => (
            <button key={m} type="button" className="mr-[2px] h-[9px] w-[6px] border border-[#999] text-[5px] leading-[7px]">{m}</button>
          ))}
        </div>
      </div>
    </div>
  );
}

function Dock() {
  return (
    <aside className="flex w-[203px] shrink-0 flex-col border-l border-[#b5b5b5] bg-[#f0f0f0]">
      <TitleBar title="Multi" active />
      <nav className="flex h-[14px] shrink-0 items-center gap-[10px] pl-[4px] text-[7px]">
        {["Layers", "Buildup", "Subjobs", "Activate"].map((m) => <button key={m} type="button">{m}</button>)}
      </nav>
      <div className="mx-[2px] flex min-h-0 flex-1 flex-col border border-[#a9abb5]">
        <LayerStack />
        <div className="flex h-[11px] shrink-0 items-center justify-between bg-[#f0f0f0]">
          <svg width="10" height="8" viewBox="0 0 10 8"><path d="M6 1.500L3.500 4L6 6.500" fill="none" stroke="#333" strokeWidth="1.400" /></svg>
          <div className="h-[9px] flex-1 bg-[#cdcdcd]" />
          <svg width="10" height="8" viewBox="0 0 10 8"><path d="M4 1.500L6.500 4L4 6.500" fill="none" stroke="#333" strokeWidth="1.400" /></svg>
        </div>
      </div>
      <div className="mx-[2px] mt-px shrink-0">
        <PlaneButtons />
        <div className="flex h-[12px] gap-[2px] text-[7px] leading-[10px]">
          <span className="w-[141px] border border-[#c8c8c8] bg-[#fafafa] px-px">Display layer in plane 3</span>
          <span className="flex-1 border border-[#c8c8c8] bg-white" />
        </div>
      </div>
      <div className="mt-[3px] border-t border-[#b0b0b0]" />
      <Tabs items={["Multi", "Layer Parameters"]} active="Multi" />
      <div className="flex h-[4px] shrink-0 items-center justify-center"><span className="w-[20px] border-t border-dotted border-[#999]" /></div>
      <TitleBar title="View Guide" />
      <ViewGuide />
      <div className="pt-[2px]">
        <Tabs items={["Grid Parameters", "View Guide", "Magnifier"]} active="View Guide" />
      </div>
    </aside>
  );
}

/* ---------- page ---------- */

export default function App() {
  return (
    <div className="flex h-screen flex-col overflow-hidden bg-[#f0f0f0] font-['Liberation_Sans',sans-serif] text-[7px] leading-[10px] text-[#111]">
      <nav className="flex h-[15px] shrink-0 items-center gap-[10px] border-b border-[#c4c4c4] pl-[3px]">
        <div className="flex items-center gap-[4px]">
          <Grip vertical />
          <button type="button">{menuItems[0]}</button>
        </div>
        {menuItems.slice(1).map((m) => <button key={m} type="button">{m}</button>)}
      </nav>

      <div className="flex min-h-0 flex-1">
        <main className="flex min-w-0 flex-1 flex-col border-l border-[#c4c4c4]">
          {/* Steps */}
          <div className="flex h-[25px] shrink-0 items-center gap-[3px] pl-[19px]">
            <Grip vertical />
            <div className="flex w-[200px] justify-between">
              {steps.map((s) => (
                <button
                  key={s}
                  type="button"
                  className="h-[18px] w-[18px] rounded-[3px] border border-[#a8a8a8] bg-linear-to-b from-[#f2f2f2] to-[#c9c9c9] font-['Open_Sans',sans-serif] text-[10px] font-bold text-[#7c7c7c]"
                >
                  {s}
                </button>
              ))}
            </div>
          </div>

          <div className="flex min-h-0 flex-1">
            {/* File tools */}
            <div className="flex w-[22px] shrink-0 flex-col items-center justify-between pt-px">
              <div className="flex flex-col items-center">
                <Grip />
                <div className="flex h-[158px] flex-col items-center justify-between">
                  <button type="button" aria-label="New"><Ico>{newIcon}</Ico></button>
                  <button type="button" aria-label="Open"><Ico>{openIcon}</Ico></button>
                  <button type="button" aria-label="Layer matrix"><Ico>{matrixIcon}</Ico></button>
                  {["CAD", "IPC356", "NET", "ODB++", "WF"].map((l) => (
                    <LabelledTool key={l} label={l}><PlugIcon /></LabelledTool>
                  ))}
                </div>
              </div>
              <div className="flex flex-col items-center">
                <Grip />
                <div className="flex h-[98px] flex-col items-center justify-between">
                  <LabelledTool label="CAD"><PlugIcon out /></LabelledTool>
                  <LabelledTool label="NET"><PlugIcon out /></LabelledTool>
                  <button type="button" aria-label="Save"><Ico>{floppy}</Ico></button>
                  <button type="button" aria-label="Save as">
                    <Ico>{floppy}<path d="M2 11h14v6H2z" fill="#f0f0f0" stroke="none" /><text x="3" y="16.500" fontSize="6" fontFamily="Liberation Sans" fontWeight="700" fill="#222" stroke="none">AS...</text></Ico>
                  </button>
                  <button type="button" aria-label="Stop">
                    <Ico><path d="M6 2.500h6L16 7v5l-4 4H6L2.500 12V7z" fill="#b52a14" stroke="#5c4038" strokeWidth="1" /></Ico>
                  </button>
                </div>
              </div>
            </div>

            <div className="min-w-0 flex-1 border-2 border-[#c2c4c8] border-t-[#b8b8b8] bg-[#e1e1e1]">
              <Board />
            </div>

            {/* View tools */}
            <div className="flex w-[44px] shrink-0 gap-px pt-px">
              <div className="flex flex-col items-center justify-between">
                <div className="flex flex-col items-center">
                  <Grip />
                  <button type="button" aria-label="Full drawing" className="flex h-[20px] w-[20px] items-center justify-center rounded-xs border border-[#9ab2d0] bg-white"><Person fill="#222" body="#2e2eb8" /></button>
                  <button type="button" aria-label="Skeleton" className="flex h-[20px] w-[20px] items-center justify-center">
                    <Ico><circle cx="9" cy="4" r="1.800" stroke="#777" fill="#ddd" strokeWidth="1" /><path d="M2 7.500H16M9 6v6M6.500 9h5M7 12l-1 4M11 12l1 4M7 12h4" stroke="#666" strokeWidth="1" /></Ico>
                  </button>
                  <button type="button" aria-label="Outline" className="flex h-[20px] w-[20px] items-center justify-center"><Person fill="#ddd" body="#fafafa" /></button>
                  <div className="flex flex-col items-center pt-[6px]"><Grip /><ToolColumn tools={zoomTools} /></div>
                  <div className="flex flex-col items-center pt-[4px]"><Grip /><ToolColumn tools={digitTools} /></div>
                </div>
                <div className="flex flex-col items-center"><Grip /><ToolColumn tools={clipTools} /></div>
              </div>
              <div className="flex flex-col items-center justify-between pt-[70px]">
                <div className="flex flex-col items-center">
                  <Grip />
                  <ToolColumn tools={frameTools} />
                  <div className="flex flex-col items-center pt-[43px]"><Grip /><ToolColumn tools={listTools} /></div>
                </div>
                <div className="flex flex-col items-center"><Grip /><ToolColumn tools={historyTools} /></div>
              </div>
            </div>
          </div>

          {/* Drawing and editing tools */}
          <div className="flex h-[45px] shrink-0 flex-col justify-around pr-[6px] pl-[2px]">
            <div className="flex items-center gap-[2px]">
              <Grip vertical />
              <div className="flex flex-1 items-center justify-between">
                {drawTools.map((t, i) => t
                  ? <button key={i} type="button" aria-label={t[0]}><Ico>{t[1]}</Ico></button>
                  : <span key={i} className="h-[18px] w-px bg-[#b8b8b8]" />)}
              </div>
            </div>
            <div className="flex items-center gap-[2px]">
              <Grip vertical />
              <div className="flex flex-1 items-center justify-between">
                {editTools.map((t, i) => {
                  if (t === null) return <span key={i} className="h-[18px] w-px bg-[#b8b8b8]" />;
                  if (t === "grip") return <Grip key={i} vertical />;
                  if (t === "field") return <span key={i} className="whitespace-nowrap">edit_objattr</span>;
                  return <button key={i} type="button" aria-label={t[0]}><Ico>{t[1]}</Ico></button>;
                })}
              </div>
            </div>
          </div>
        </main>

        {/* Splitter */}
        <div className="flex w-[3px] shrink-0 items-center justify-center border-l border-[#c4c4c4]">
          <span className="h-[20px] border-l border-dotted border-[#999]" />
        </div>

        <Dock />
      </div>
    </div>
  );
}
